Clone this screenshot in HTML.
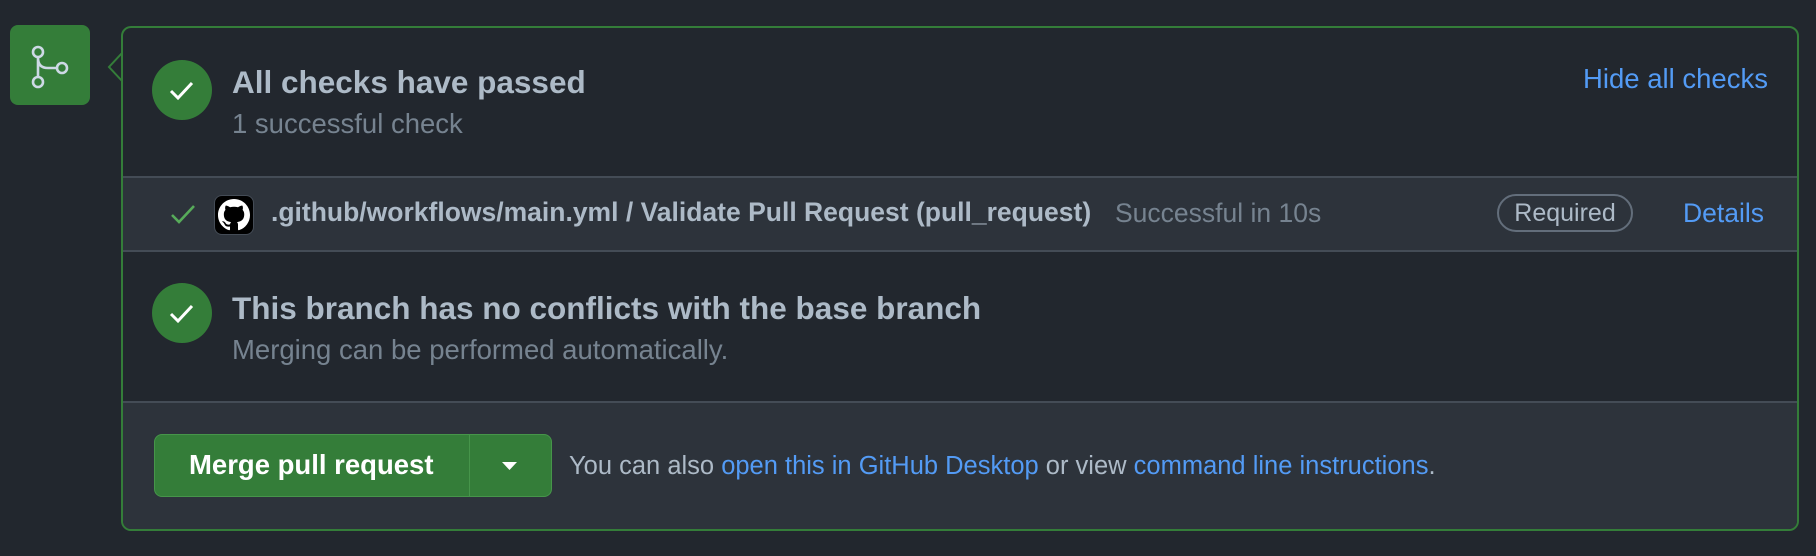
<!DOCTYPE html>
<html><head><meta charset="utf-8"><style>
*{margin:0;padding:0;box-sizing:border-box}
body{width:1816px;height:556px;background:#22272e;font-family:"Liberation Sans",sans-serif;position:relative;overflow:hidden;color:#adbac7}
.abs{position:absolute;white-space:nowrap}
.branch{left:10px;top:25px;width:80px;height:80px;background:#347d39;border-radius:8px}
.card{left:121px;top:26px;width:1678px;height:505px;border:2px solid #347d39;border-radius:10px;background:#22272e;overflow:hidden}
.circle{width:60px;height:60px;border-radius:50%;background:#347d39}
.t{font-weight:bold;font-size:31.5px;color:#adbac7}
.s{font-size:27.5px;color:#768390}
a{color:#539bf5;text-decoration:none}
</style></head><body>
<div class="abs branch">
<svg width="80" height="80" viewBox="0 0 80 80"><g fill="none" stroke="#cdd9e5" stroke-width="2.6"><circle cx="28" cy="27" r="5"/><circle cx="28" cy="57" r="5"/><circle cx="52" cy="43" r="5"/><path d="M28 32v20M28 33q0 10 10 10h9"/></g></svg>
</div>
<svg class="abs" style="left:107px;top:52px" width="18" height="32" viewBox="0 0 18 32"><path d="M16 0 L2 15 L16 30" fill="#22272e" stroke="#347d39" stroke-width="2"/></svg>
<div class="abs card">
 <div class="abs" style="left:0;top:148px;width:1676px;height:76px;background:#2d333b;border-top:2px solid #444c56;border-bottom:2px solid #444c56"></div>
 <div class="abs" style="left:0;top:373px;width:1676px;height:140px;background:#2d333b;border-top:2px solid #444c56"></div>
</div>
<div class="abs circle" style="left:152px;top:60px"></div>
<svg class="abs" style="left:152px;top:60px" width="60" height="60"><path d="M19 31l7 7 14-15" fill="none" stroke="#fff" stroke-width="3"/></svg>
<div class="abs t" style="left:232px;top:64px">All checks have passed</div>
<div class="abs s" style="left:232px;top:108px">1 successful check</div>
<a class="abs" style="left:1583px;top:63px;font-size:27.5px">Hide all checks</a>

<svg class="abs" style="left:170px;top:204px" width="26" height="20"><path d="M2 11l7 7 15-16" fill="none" stroke="#57ab5a" stroke-width="2.6"/></svg>
<div class="abs" style="left:214px;top:195px;width:40px;height:40px;background:#000;border-radius:8px;border:1px solid #444c56"></div>
<svg class="abs" style="left:218px;top:199px" width="32" height="32" viewBox="0 0 16 16"><path fill="#fff" d="M8 0C3.580 0 0 3.58 0 8c0 3.54 2.29 6.53 5.47 7.59.4.07.55-.17.55-.38 0-.19-.01-.82-.01-1.490-2.01.37-2.53-.49-2.69-.94-.09-.23-.48-.94-.82-1.13-.28-.15-.68-.52-.01-.53.63-.01 1.08.58 1.23.82.72 1.21 1.87.87 2.33.66.07-.52.28-.87.51-1.07-1.78-.2-3.64-.89-3.640-3.95 0-.87.31-1.59.82-2.15-.08-.2-.36-1.02.08-2.12 0 0 .67-.21 2.2.82.64-.18 1.32-.27 2-.27.68 0 1.36.09 2 .27 1.53-1.04 2.2-.82 2.2-.82.44 1.1.16 1.92.08 2.12.51.56.82 1.27.82 2.15 0 3.07-1.87 3.75-3.65 3.95.29.25.54.73.54 1.48 0 1.07-.01 1.93-.01 2.2 0 .21.15.46.55.38A8.013 8.013 0 0016 8c0-4.42-3.58-8-8-8z"/></svg>
<div class="abs" style="left:271px;top:197px;font-size:26.5px;font-weight:bold;color:#adbac7">.github/workflows/main.yml / Validate Pull Request (pull_request)</div>
<div class="abs" style="left:1115px;top:198px;font-size:26.5px;color:#768390">Successful in 10s</div>
<div class="abs" style="left:1497px;top:194px;width:136px;height:38px;border:2px solid #636e7b;border-radius:19px;text-align:center;line-height:34px;font-size:25px;color:#adbac7">Required</div>
<a class="abs" style="left:1683px;top:198px;font-size:26.5px">Details</a>

<div class="abs circle" style="left:152px;top:283px"></div>
<svg class="abs" style="left:152px;top:283px" width="60" height="60"><path d="M19 31l7 7 14-15" fill="none" stroke="#fff" stroke-width="3"/></svg>
<div class="abs t" style="left:232px;top:290px">This branch has no conflicts with the base branch</div>
<div class="abs s" style="left:232px;top:334px">Merging can be performed automatically.</div>

<div class="abs" style="left:154px;top:434px;width:398px;height:63px;background:#347d39;border:1px solid #46954a;border-radius:8px"></div>
<div class="abs" style="left:469px;top:435px;width:1px;height:61px;background:#46954a"></div>
<div class="abs" style="left:189px;top:449px;font-size:27.5px;font-weight:bold;color:#fff">Merge pull request</div>
<svg class="abs" style="left:502px;top:462px" width="16" height="10"><path d="M0 0h15l-7.5 8z" fill="#fff"/></svg>
<div class="abs" style="left:569px;top:452px;font-size:25.5px;color:#adbac7">You can also <a>open this in GitHub Desktop</a> or view <a>command line instructions</a>.</div>
</body></html>
